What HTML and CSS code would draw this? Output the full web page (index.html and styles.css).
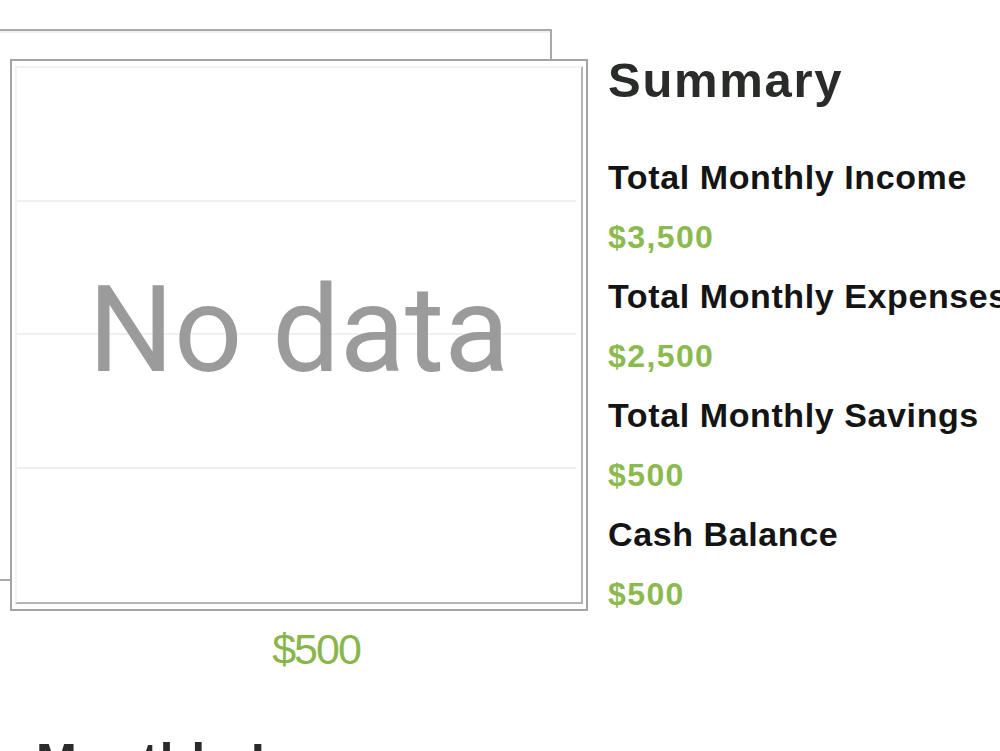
FILE: index.html
```html
<!DOCTYPE html>
<html lang="en">
<head>
    <meta charset="UTF-8">
    <meta name="viewport" content="width=device-width, initial-scale=1.0">
    <title>Budget Overview</title>
    <link rel="stylesheet" href="styles.css">
</head>
<body>
    <main class="overview">
        <section class="chart-col">
            <div class="chart-stack">
                <div class="chart-card">
                    <div class="plot">
                        <div class="plot-row"></div>
                        <div class="plot-row"></div>
                        <div class="plot-row"></div>
                        <div class="plot-row last"></div>
                        <div class="no-data">No data</div>
                    </div>
                </div>
            </div>
            <p class="chart-total">$500</p>
        </section>

        <section class="summary">
            <h2 class="section-title">Summary</h2>
            <dl class="summary-list">
                <dt>Total Monthly Income</dt>
                <dd>$3,500</dd>
                <dt>Total Monthly Expenses</dt>
                <dd>$2,500</dd>
                <dt>Total Monthly Savings</dt>
                <dd>$500</dd>
                <dt>Cash Balance</dt>
                <dd>$500</dd>
            </dl>
        </section>
    </main>

    <section class="income">
        <h2 class="section-title">Monthly Income</h2>
    </section>
</body>
</html>
```

FILE: styles.css
```css
body {
    margin: 0;
    padding: 0;
    background-color: #fff;
    font-family: "Liberation Sans", Arial, sans-serif;
    overflow: hidden;
}
.overview {
    display: flex;
    align-items: flex-start;
    gap: 20px;
    padding: 50px 0 0 10px;
}
.chart-col {
    flex: 0 0 578px;
    margin-top: 9px;
}
.chart-stack {
    position: relative;
    isolation: isolate;
}
/* the card stacked behind the chart */
.chart-stack::before {
    content: "";
    position: absolute;
    top: 0;
    left: 0;
    width: 578px;
    height: 552px;
    box-sizing: border-box;
    border: 2px solid #a9a9a9;
    box-shadow: inset 0 6px 0 -4px #f0f0f0;
    transform: translate(-36px, -30px);
    z-index: -1;
}
.chart-card {
    box-sizing: border-box;
    width: 578px;
    height: 552px;
    background-color: #fff;
    border: 2px solid #a4a4a4;
    padding: 5px 3px 5px 3px;
}
.plot {
    position: relative;
    box-sizing: border-box;
    height: 100%;
    display: grid;
    grid-template-rows: repeat(4, 1fr);
    border: 2px solid #b4b4b4;
    border-top-color: #f1f1f1;
    border-left-color: #f3f3f3;
    padding-right: 5px;
}
.plot-row {
    border-bottom: 2px solid #f0f0f0;
}
.plot-row.last {
    border-bottom: none;
}
.no-data {
    position: absolute;
    inset: 0;
    display: flex;
    align-items: center;
    justify-content: center;
    padding-bottom: 10px;
    font-family: Roboto, sans-serif;
    font-size: 120px;
    line-height: 1;
    color: #9b9b9b;
}
.chart-total {
    margin: 13px 0 0 0;
    padding-left: 34px;
    text-align: center;
    font-size: 43px;
    line-height: 1.2;
    letter-spacing: -2px;
    color: #88b64b;
}
.section-title {
    margin: 0;
    font-size: 49px;
    line-height: 60px;
    letter-spacing: 1.7px;
    font-weight: bold;
    color: #2a2c2a;
    white-space: nowrap;
}
.summary {
    flex: 1;
    min-width: 0;
}
.summary-list {
    margin: 38px 0 0 0;
    white-space: nowrap;
}
.summary-list dt {
    font-size: 34px;
    line-height: 59.5px;
    font-weight: bold;
    letter-spacing: 0.6px;
    color: #141414;
}
.summary-list dd {
    margin: 0;
    font-size: 32px;
    line-height: 59.5px;
    font-weight: bold;
    letter-spacing: 1.4px;
    color: #8bba4e;
}
.income {
    padding: 54px 0 0 36px;
}
```
